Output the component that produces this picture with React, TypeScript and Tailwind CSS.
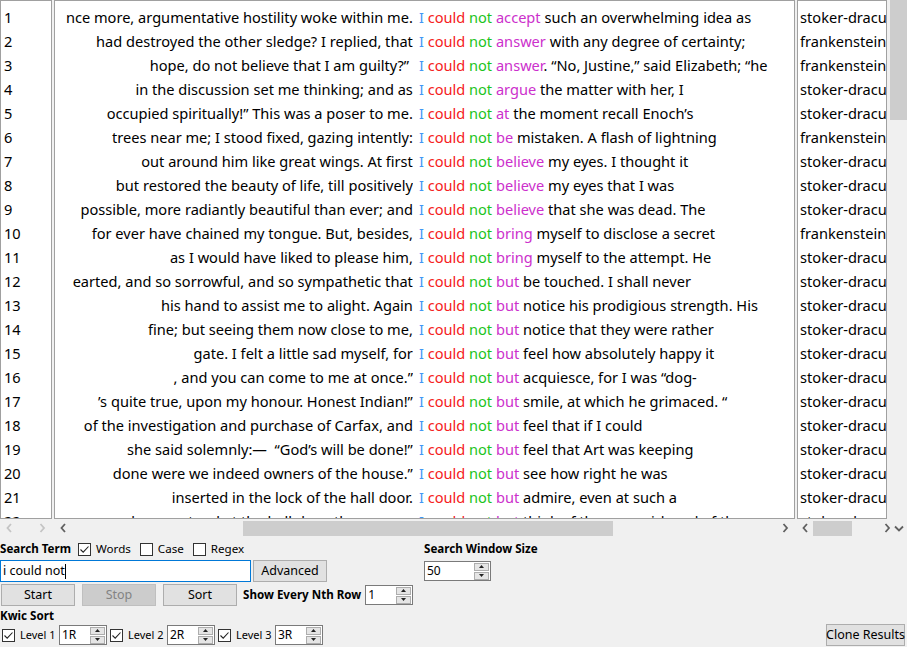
import React from 'react';

type Row = { left: string; word: string; right: string; file: string };

const D = 'stoker-dracula.txt';
const F = 'frankenstein.txt';

const rows: Row[] = [
  { left: 'nce more, argumentative hostility woke within me.', word: 'accept', right: ' such an overwhelming idea as', file: D },
  { left: 'had destroyed the other sledge? I replied, that', word: 'answer', right: ' with any degree of certainty;', file: F },
  { left: 'hope, do not believe that I am guilty?” ', word: 'answer', right: '. “No, Justine,” said Elizabeth; “he', file: F },
  { left: 'in the discussion set me thinking; and as', word: 'argue', right: ' the matter with her, I', file: D },
  { left: 'occupied spiritually!” This was a poser to me.', word: 'at', right: ' the moment recall Enoch’s', file: D },
  { left: 'trees near me; I stood fixed, gazing intently:', word: 'be', right: ' mistaken. A flash of lightning', file: F },
  { left: 'out around him like great wings. At first', word: 'believe', right: ' my eyes. I thought it', file: D },
  { left: 'but restored the beauty of life, till positively', word: 'believe', right: ' my eyes that I was', file: D },
  { left: 'possible, more radiantly beautiful than ever; and', word: 'believe', right: ' that she was dead. The', file: D },
  { left: 'for ever have chained my tongue. But, besides,', word: 'bring', right: ' myself to disclose a secret', file: F },
  { left: 'as I would have liked to please him,', word: 'bring', right: ' myself to the attempt. He', file: D },
  { left: 'earted, and so sorrowful, and so sympathetic that', word: 'but', right: ' be touched. I shall never', file: D },
  { left: 'his hand to assist me to alight. Again', word: 'but', right: ' notice his prodigious strength. His', file: D },
  { left: 'fine; but seeing them now close to me,', word: 'but', right: ' notice that they were rather', file: D },
  { left: 'gate. I felt a little sad myself, for', word: 'but', right: ' feel how absolutely happy it', file: D },
  { left: ', and you can come to me at once.”', word: 'but', right: ' acquiesce, for I was “dog-', file: D },
  { left: '’s quite true, upon my honour. Honest Indian!”', word: 'but', right: ' smile, at which he grimaced. “', file: D },
  { left: 'of the investigation and purchase of Carfax, and', word: 'but', right: ' feel that if I could', file: D },
  { left: 'she said solemnly:—  “God’s will be done!”', word: 'but', right: ' feel that Art was keeping', file: D },
  { left: 'done were we indeed owners of the house.”', word: 'but', right: ' see how right he was', file: D },
  { left: 'inserted in the lock of the hall door.', word: 'but', right: ' admire, even at such a', file: D },
  { left: 'and as we stood at the hall door, there was a', word: 'but', right: ' think of the poor girl, and of the', file: D },
];

const Chevron = ({ dir, disabled }: { dir: 'left' | 'right' | 'down'; disabled?: boolean }) => {
  const color = disabled ? '#c4c4c4' : '#606060';
  const d = dir === 'left' ? 'M5 1L1.5 5L5 9' : dir === 'right' ? 'M1.5 1L5 5L1.5 9' : 'M1 1.5L5 5.5L9 1.5';
  const w = dir === 'down' ? 10 : 7;
  const h = dir === 'down' ? 7 : 10;
  return (
    <svg width={w} height={h} viewBox={`0 0 ${w} ${h}`} fill="none" className="shrink-0">
      <path d={d} stroke={color} strokeWidth={1.8} />
    </svg>
  );
};

const CheckBox = ({ checked }: { checked?: boolean }) => (
  <div className="w-[13px] h-[13px] border border-[#333333] bg-white flex items-center justify-center shrink-0">
    {checked && (
      <svg width="11" height="11" viewBox="0 0 11 11" fill="none">
        <path d="M1.5 5.5L4.2 8.2L9.5 2.5" stroke="#222" strokeWidth={1.1} />
      </svg>
    )}
  </div>
);

const SpinBox = ({ value, width }: { value: string; width: string }) => (
  <div className={`${width} h-[20px] border border-[#7a7a7a] bg-white flex items-center justify-between pl-[2px] pr-[1px] shrink-0`}>
    <span className="text-[12px] leading-none">{value}</span>
    <div className="flex flex-col gap-px">
      <div className="w-[15px] h-[8px] bg-[#e5e5e5] border border-[#adadad] flex items-center justify-center">
        <svg width="5" height="3" viewBox="0 0 5 3"><path d="M0 3L2.5 0L5 3Z" fill="#222" /></svg>
      </div>
      <div className="w-[15px] h-[8px] bg-[#e5e5e5] border border-[#adadad] flex items-center justify-center">
        <svg width="5" height="3" viewBox="0 0 5 3"><path d="M0 0L2.5 3L5 0Z" fill="#222" /></svg>
      </div>
    </div>
  </div>
);

const Button = ({ label, width, disabled }: { label: string; width: string; disabled?: boolean }) => (
  <div
    className={`${width} h-[22px] flex items-center justify-center text-[12.5px] whitespace-nowrap border shrink-0 ${
      disabled ? 'bg-[#cccccc] border-[#bfbfbf] text-[#838383]' : 'bg-[#e1e1e1] border-[#adadad] text-black'
    }`}
  >
    {label}
  </div>
);

export default function App() {
  return (
    <div className="w-[907px] h-[647px] bg-[#f0f0f0] overflow-hidden font-['Noto_Sans',sans-serif] text-black flex flex-col">
      {/* result panes */}
      <div className="flex h-[537px]">
        {/* line numbers */}
        <div className="w-[52px] flex flex-col">
          <div className="h-[519px] border border-[#a0a0a0] bg-white overflow-hidden pt-[4px]">
            {rows.map((_, i) => (
              <div key={i} className="h-[24px] leading-[24px] text-[14.6px] pl-[3px]">
                {i + 1}
              </div>
            ))}
          </div>
          <div className="h-[18px] flex items-center justify-between px-[6px]">
            <Chevron dir="left" disabled />
            <Chevron dir="right" disabled />
          </div>
        </div>

        {/* kwic text */}
        <div className="w-[743px] ml-[2px] flex flex-col">
          <div className="h-[519px] border border-[#a0a0a0] bg-white overflow-hidden pt-[4px]">
            {rows.map((r, i) => (
              <div key={i} className="h-[24px] leading-[24px] text-[14.6px] flex whitespace-pre">
                <div className="w-[358px] shrink-0 flex justify-end overflow-hidden">
                  <span className="shrink-0">{r.left}</span>
                </div>
                <div className="ml-[6px] shrink-0">
                  <span className="text-[#3d97f5]">I</span> <span className="text-[#f52020]">could</span>{' '}
                  <span className="text-[#1cc41c]">not</span> <span className="text-[#cc30cc]">{r.word}</span>
                  <span>{r.right}</span>
                </div>
              </div>
            ))}
          </div>
          <div className="h-[18px] flex items-center pl-[6px] pr-[6px]">
            <Chevron dir="left" />
            <div className="ml-[176px] w-[370px] h-[15px] bg-[#cdcdcd]" />
            <div className="flex-1" />
            <Chevron dir="right" />
          </div>
        </div>

        {/* file names */}
        <div className="w-[90px] ml-[2px] flex flex-col">
          <div className="h-[519px] border border-[#a0a0a0] bg-white overflow-hidden pt-[4px]">
            {rows.map((r, i) => (
              <div key={i} className="h-[24px] leading-[24px] text-[14.6px] pl-[2px] whitespace-nowrap">
                {r.file}
              </div>
            ))}
          </div>
          <div className="h-[18px] flex items-center pl-[5px]">
            <Chevron dir="left" />
            <div className="ml-[4px] w-[39px] h-[15px] bg-[#cdcdcd]" />
            <div className="flex-1" />
            <div className="mr-[-4px]">
              <Chevron dir="right" />
            </div>
          </div>
        </div>

        {/* vertical scrollbar */}
        <div className="w-[17px] ml-[3px] flex flex-col">
          <div className="h-[120px] bg-[#cdcdcd]" />
          <div className="flex-1" />
          <div className="h-[18px] flex items-center justify-center">
            <Chevron dir="down" />
          </div>
        </div>
      </div>

      {/* controls */}
      <div className="flex-1 flex text-[11.6px] whitespace-nowrap pt-[2px]">
        <div className="w-[424px] flex flex-col">
          <div className="flex items-center h-[20px]">
            <span className="font-bold mr-[7px]">Search Term</span>
            <CheckBox checked />
            <span className="ml-[5px] mr-[9px]">Words</span>
            <CheckBox />
            <span className="ml-[5px] mr-[9px]">Case</span>
            <CheckBox />
            <span className="ml-[5px]">Regex</span>
          </div>
          <div className="flex items-center mt-[1px] gap-[2px]">
            <div className="w-[251px] h-[22px] border border-[#0078d7] bg-white flex items-center pl-[2px] text-[12.5px]">
              <span>i could not</span>
              <span className="w-px h-[15px] bg-black" />
            </div>
            <Button label="Advanced" width="w-[74px]" />
          </div>
          <div className="flex items-center mt-[2px] h-[22px]">
            <div className="ml-[1px]">
              <Button label="Start" width="w-[74px]" />
            </div>
            <div className="ml-[7px]">
              <Button label="Stop" width="w-[74px]" disabled />
            </div>
            <div className="ml-[7px]">
              <Button label="Sort" width="w-[74px]" />
            </div>
            <span className="font-bold ml-[6px]">Show Every Nth Row</span>
            <div className="ml-[4px]">
              <SpinBox value="1" width="w-[48px]" />
            </div>
          </div>
          <div className="font-bold h-[18px] leading-[18px] mt-[1px]">Kwic Sort</div>
          <div className="flex items-center h-[20px] text-[11px]">
            <div className="ml-[2px]">
              <CheckBox checked />
            </div>
            <span className="ml-[5px] mr-[4px] w-[35px]">Level 1</span>
            <SpinBox value="1R" width="w-[48px]" />
            <div className="ml-[3px]">
              <CheckBox checked />
            </div>
            <span className="ml-[5px] mr-[4px] w-[35px]">Level 2</span>
            <SpinBox value="2R" width="w-[48px]" />
            <div className="ml-[3px]">
              <CheckBox checked />
            </div>
            <span className="ml-[5px] mr-[4px] w-[35px]">Level 3</span>
            <SpinBox value="3R" width="w-[48px]" />
          </div>
        </div>
        <div className="flex flex-col">
          <div className="font-bold h-[20px] flex items-center">Search Window Size</div>
          <div className="mt-[2px]">
            <SpinBox value="50" width="w-[67px]" />
          </div>
        </div>
        <div className="flex-1 flex items-end justify-end pr-[2px] pb-[1px]">
          <Button label="Clone Results" width="w-[79px]" />
        </div>
      </div>
    </div>
  );
}
